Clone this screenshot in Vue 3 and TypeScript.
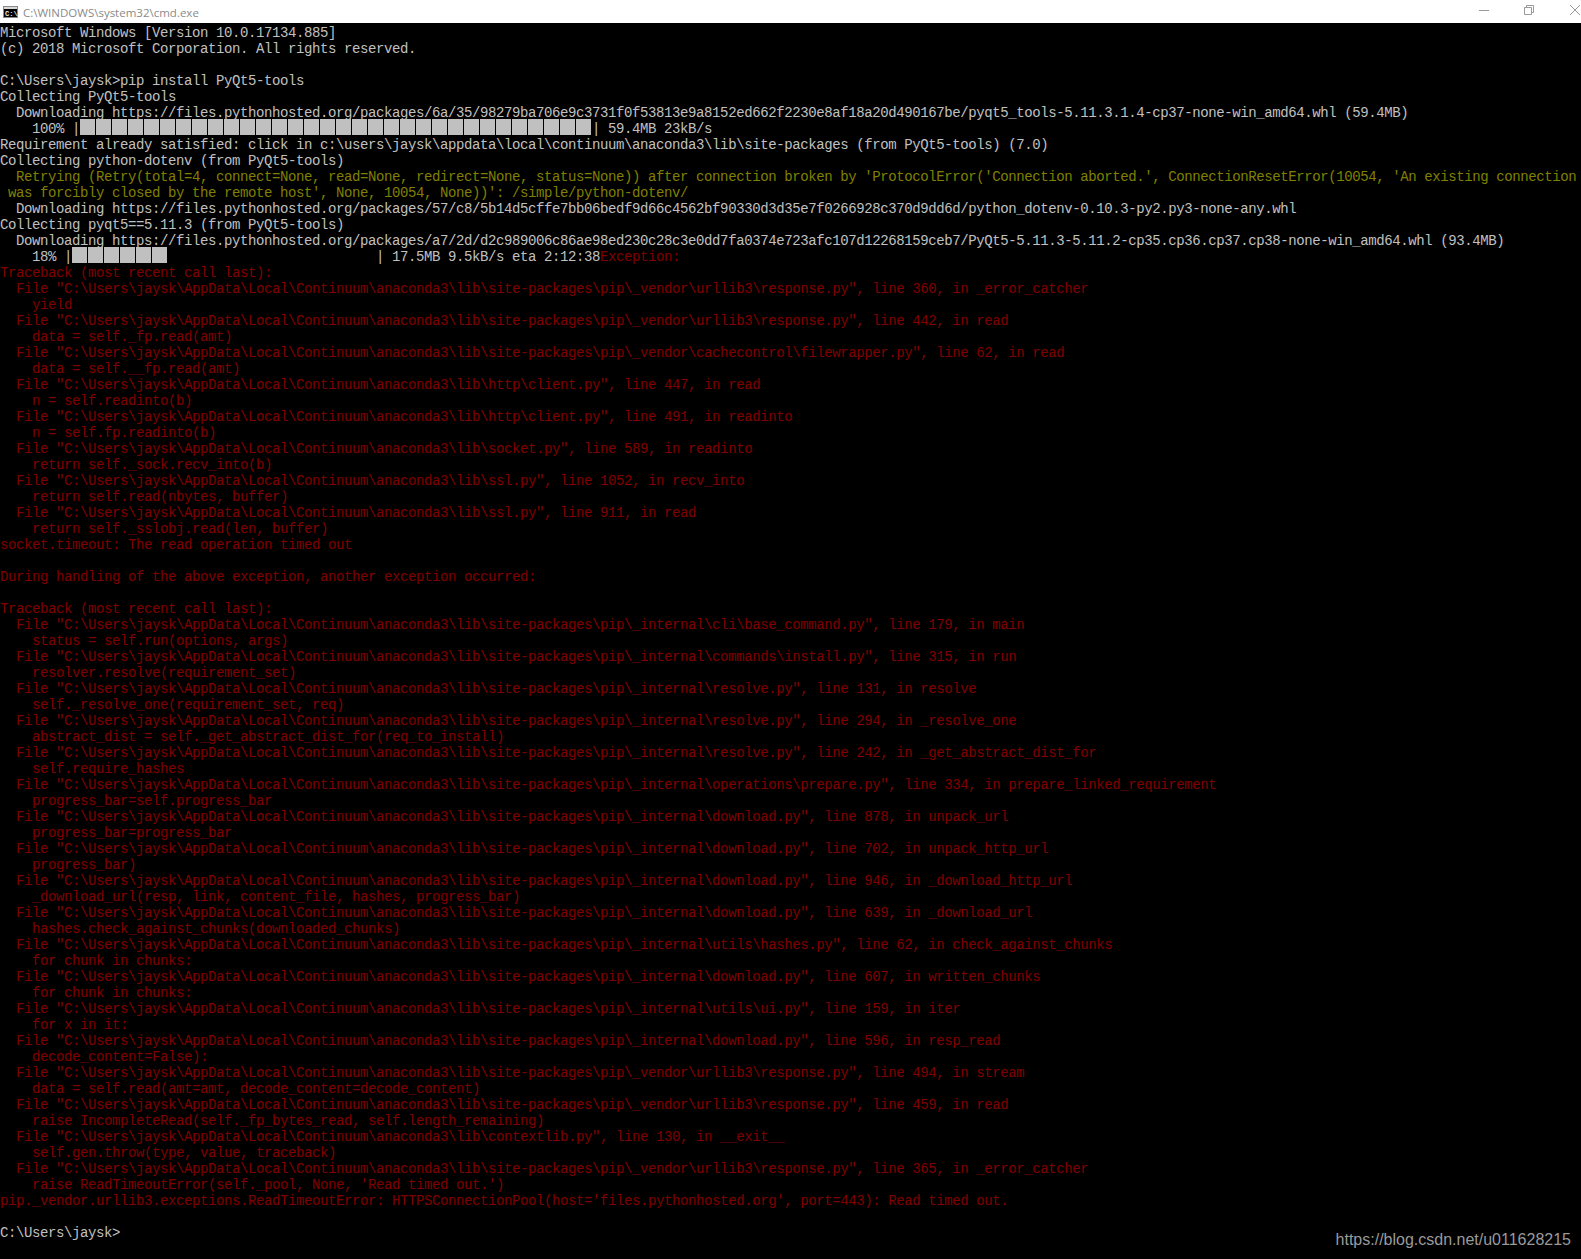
<script setup lang="ts">
interface Seg { t?: string; c?: string; bar?: number }

const G = 'gray'
const Y = 'yellow'
const R = 'red'
const ROOT = 'C:\\Users\\jaysk\\AppData\\Local\\Continuum\\anaconda3\\lib\\'
const PIP = 'site-packages\\pip\\'

const g = (t: string): Seg[] => [{ t, c: G }]
const y = (t: string): Seg[] => [{ t, c: Y }]
const r = (t: string): Seg[] => [{ t, c: R }]
const frame = (file: string, line: number, fn: string, code: string): Seg[][] => [
  r(`  File "${ROOT}${file}", line ${line}, in ${fn}`),
  r(`    ${code}`),
]

const lines: Seg[][] = [
  g('Microsoft Windows [Version 10.0.17134.885]'),
  g('(c) 2018 Microsoft Corporation. All rights reserved.'),
  [],
  g('C:\\Users\\jaysk>pip install PyQt5-tools'),
  g('Collecting PyQt5-tools'),
  g('  Downloading https://files.pythonhosted.org/packages/6a/35/98279ba706e9c3731f0f53813e9a8152ed662f2230e8af18a20d490167be/pyqt5_tools-5.11.3.1.4-cp37-none-win_amd64.whl (59.4MB)'),
  [{ t: '    100% |', c: G }, { bar: 32 }, { t: '| 59.4MB 23kB/s', c: G }],
  g('Requirement already satisfied: click in c:\\users\\jaysk\\appdata\\local\\continuum\\anaconda3\\lib\\site-packages (from PyQt5-tools) (7.0)'),
  g('Collecting python-dotenv (from PyQt5-tools)'),
  y("  Retrying (Retry(total=4, connect=None, read=None, redirect=None, status=None)) after connection broken by 'ProtocolError('Connection aborted.', ConnectionResetError(10054, 'An existing connection"),
  y(" was forcibly closed by the remote host', None, 10054, None))': /simple/python-dotenv/"),
  g('  Downloading https://files.pythonhosted.org/packages/57/c8/5b14d5cffe7bb06bedf9d66c4562bf90330d3d35e7f0266928c370d9dd6d/python_dotenv-0.10.3-py2.py3-none-any.whl'),
  g('Collecting pyqt5==5.11.3 (from PyQt5-tools)'),
  g('  Downloading https://files.pythonhosted.org/packages/a7/2d/d2c989006c86ae98ed230c28c3e0dd7fa0374e723afc107d12268159ceb7/PyQt5-5.11.3-5.11.2-cp35.cp36.cp37.cp38-none-win_amd64.whl (93.4MB)'),
  [{ t: '    18% |', c: G }, { bar: 6 }, { t: '                          | 17.5MB 9.5kB/s eta 2:12:38', c: G }, { t: 'Exception:', c: R }],
  r('Traceback (most recent call last):'),
  ...frame(`${PIP}_vendor\\urllib3\\response.py`, 360, '_error_catcher', 'yield'),
  ...frame(`${PIP}_vendor\\urllib3\\response.py`, 442, 'read', 'data = self._fp.read(amt)'),
  ...frame(`${PIP}_vendor\\cachecontrol\\filewrapper.py`, 62, 'read', 'data = self.__fp.read(amt)'),
  ...frame('http\\client.py', 447, 'read', 'n = self.readinto(b)'),
  ...frame('http\\client.py', 491, 'readinto', 'n = self.fp.readinto(b)'),
  ...frame('socket.py', 589, 'readinto', 'return self._sock.recv_into(b)'),
  ...frame('ssl.py', 1052, 'recv_into', 'return self.read(nbytes, buffer)'),
  ...frame('ssl.py', 911, 'read', 'return self._sslobj.read(len, buffer)'),
  r('socket.timeout: The read operation timed out'),
  [],
  r('During handling of the above exception, another exception occurred:'),
  [],
  r('Traceback (most recent call last):'),
  ...frame(`${PIP}_internal\\cli\\base_command.py`, 179, 'main', 'status = self.run(options, args)'),
  ...frame(`${PIP}_internal\\commands\\install.py`, 315, 'run', 'resolver.resolve(requirement_set)'),
  ...frame(`${PIP}_internal\\resolve.py`, 131, 'resolve', 'self._resolve_one(requirement_set, req)'),
  ...frame(`${PIP}_internal\\resolve.py`, 294, '_resolve_one', 'abstract_dist = self._get_abstract_dist_for(req_to_install)'),
  ...frame(`${PIP}_internal\\resolve.py`, 242, '_get_abstract_dist_for', 'self.require_hashes'),
  ...frame(`${PIP}_internal\\operations\\prepare.py`, 334, 'prepare_linked_requirement', 'progress_bar=self.progress_bar'),
  ...frame(`${PIP}_internal\\download.py`, 878, 'unpack_url', 'progress_bar=progress_bar'),
  ...frame(`${PIP}_internal\\download.py`, 702, 'unpack_http_url', 'progress_bar)'),
  ...frame(`${PIP}_internal\\download.py`, 946, '_download_http_url', '_download_url(resp, link, content_file, hashes, progress_bar)'),
  ...frame(`${PIP}_internal\\download.py`, 639, '_download_url', 'hashes.check_against_chunks(downloaded_chunks)'),
  ...frame(`${PIP}_internal\\utils\\hashes.py`, 62, 'check_against_chunks', 'for chunk in chunks:'),
  ...frame(`${PIP}_internal\\download.py`, 607, 'written_chunks', 'for chunk in chunks:'),
  ...frame(`${PIP}_internal\\utils\\ui.py`, 159, 'iter', 'for x in it:'),
  ...frame(`${PIP}_internal\\download.py`, 596, 'resp_read', 'decode_content=False):'),
  ...frame(`${PIP}_vendor\\urllib3\\response.py`, 494, 'stream', 'data = self.read(amt=amt, decode_content=decode_content)'),
  ...frame(`${PIP}_vendor\\urllib3\\response.py`, 459, 'read', 'raise IncompleteRead(self._fp_bytes_read, self.length_remaining)'),
  ...frame('contextlib.py', 130, '__exit__', 'self.gen.throw(type, value, traceback)'),
  ...frame(`${PIP}_vendor\\urllib3\\response.py`, 365, '_error_catcher', "raise ReadTimeoutError(self._pool, None, 'Read timed out.')"),
  r("pip._vendor.urllib3.exceptions.ReadTimeoutError: HTTPSConnectionPool(host='files.pythonhosted.org', port=443): Read timed out."),
  [],
  g('C:\\Users\\jaysk>'),
]
</script>

<template>
  <div class="window">
    <header class="titlebar">
      <svg class="app-icon" width="15" height="12" viewBox="0 0 15 12" aria-hidden="true">
        <rect x="0.5" y="0.5" width="14" height="11" fill="#000" stroke="#8a8a8a" />
        <rect x="1" y="1" width="13" height="2" fill="#d8d8d8" />
        <text x="2" y="9.5" class="icon-text">C:\</text>
      </svg>
      <span class="title">C:\WINDOWS\system32\cmd.exe</span>
      <div class="controls">
        <svg width="10" height="10" viewBox="0 0 10 10" aria-hidden="true">
          <path d="M0 5.5H10" stroke="#999" fill="none" />
        </svg>
        <svg width="10" height="10" viewBox="0 0 10 10" aria-hidden="true">
          <path d="M0.5 2.5H7.5V9.5H0.5ZM2.5 2.5V0.5H9.5V7.5H7.5" stroke="#999" fill="none" />
        </svg>
        <svg class="close" width="10" height="10" viewBox="0 0 10 10" aria-hidden="true">
          <path d="M0 0L10 10M10 0L0 10" stroke="#999" fill="none" />
        </svg>
      </div>
    </header>
    <main class="console">
      <div v-for="(line, i) in lines" :key="i" class="line">
        <template v-for="(seg, j) in line" :key="j">
          <span v-if="seg.bar" class="bar">
            <i v-for="n in seg.bar" :key="n" class="block"></i>
          </span>
          <span v-else :class="seg.c">{{ seg.t }}</span>
        </template>
      </div>
      <div class="watermark">https://blog.csdn.net/u011628215</div>
    </main>
  </div>
</template>

<style scoped>
.window {
  width: 1581px;
  height: 1259px;
  display: flex;
  flex-direction: column;
  overflow: hidden;
  background: #000;
}
.titlebar {
  height: 23px;
  flex: none;
  background: #fff;
  display: flex;
  align-items: center;
  padding-left: 3px;
  font: 11.5px/23px "Open Sans", "Liberation Sans", sans-serif;
}
.app-icon {
  flex: none;
  margin-right: 5px;
}
.icon-text {
  font: bold 7px "Liberation Mono", monospace;
  fill: #e8e8e8;
}
.title {
  color: #8a8a8a;
  padding-top: 2px;
}
.controls {
  margin-left: auto;
  display: flex;
  gap: 35px;
  padding-right: 1px;
  margin-bottom: 3px;
}
.controls svg {
  display: block;
}
.controls .close {
  margin-left: 1px;
}
.console {
  position: relative;
  flex: 1;
  background: #000;
  font: 14px/20px "Liberation Mono", monospace;
  letter-spacing: -0.4px;
  white-space: pre;
}
.line {
  height: 16px;
}
.gray {
  color: #c0c0c0;
}
.yellow {
  color: #808000;
}
.red {
  color: #800000;
}
.bar {
  display: inline-flex;
  vertical-align: top;
  height: 16px;
}
.block {
  display: block;
  width: 15px;
  height: 16px;
  margin-right: 1px;
  background: #c0c0c0;
}
.watermark {
  position: absolute;
  right: 10px;
  bottom: 9px;
  font: 16px/20px "Liberation Sans", sans-serif;
  letter-spacing: 0;
  color: #9a9a9a;
}
</style>

<style>
html,
body {
  background: #000;
}
</style>
